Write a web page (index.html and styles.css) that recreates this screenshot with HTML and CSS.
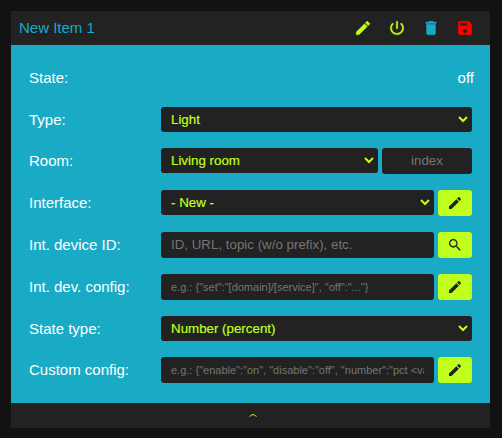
FILE: index.html
```html
<!DOCTYPE html>
<html lang="en">
<head>
<meta charset="utf-8">
<title>New Item 1</title>
<link rel="stylesheet" href="styles.css">
</head>
<body>
<svg class="defs" aria-hidden="true">
  <symbol id="pencil" viewBox="0 0 24 24"><path d="M3 17.25V21h3.75L17.81 9.94l-3.75-3.75L3 17.25zM20.71 7.04c.39-.39.39-1.02 0-1.41l-2.34-2.34c-.39-.39-1.02-.39-1.41 0l-1.83 1.83 3.75 3.75 1.83-1.83z"/></symbol>
  <symbol id="power" viewBox="0 0 24 24"><path d="M13 3h-2v10h2V3zm4.83 2.17l-1.42 1.42C17.99 7.86 19 9.81 19 12c0 3.87-3.13 7-7 7s-7-3.13-7-7c0-2.19 1.01-4.14 2.58-5.42L6.17 5.17C4.23 6.82 3 9.26 3 12c0 4.97 4.03 9 9 9s9-4.03 9-9c0-2.74-1.23-5.18-3.17-6.83z"/></symbol>
  <symbol id="trash" viewBox="0 0 24 24"><path d="M6 19c0 1.1.9 2 2 2h8c1.100 0 2-.9 2-2V7H6v12zM19 4h-3.500l-1-1h-5l-1 1H5v2h14V4z"/></symbol>
  <symbol id="save" viewBox="0 0 24 24"><path d="M17 3H5c-1.110 0-2 .9-2 2v14c0 1.100.890 2 2 2h14c1.100 0 2-.9 2-2V7l-4-4zm-5 16c-1.660 0-3-1.340-3-3s1.340-3 3-3 3 1.340 3 3-1.340 3-3 3zm3-10H5V5h10v4z"/></symbol>
  <symbol id="search" viewBox="0 0 24 24"><path d="M15.500 14h-.79l-.28-.27C15.410 12.590 16 11.110 16 9.500 16 5.910 13.090 3 9.500 3S3 5.910 3 9.500 5.910 16 9.500 16c1.610 0 3.090-.59 4.230-1.570l.27.28v.79l5 4.990L20.490 19l-4.990-5zm-6 0C7.010 14 5 11.990 5 9.500S7.010 5 9.500 5 14 7.010 14 9.500 11.990 14 9.500 14z"/></symbol>
</svg>
<main class="card">
  <header class="head">
    <span class="title">New Item 1</span>
    <svg class="lime"><use href="#pencil"/></svg>
    <svg class="lime"><use href="#power"/></svg>
    <svg class="blue"><use href="#trash"/></svg>
    <svg class="red"><use href="#save"/></svg>
  </header>
  <section class="body">
    <div class="row state"><span class="label">State:</span><span>off</span></div>
    <div class="row short"><span class="label">Type:</span><select><option>Light</option></select></div>
    <div class="row"><span class="label">Room:</span><select><option>Living room</option></select><input class="index" placeholder="index"></div>
    <div class="row"><span class="label">Interface:</span><select><option>- New -</option></select><button><svg><use href="#pencil"/></svg></button></div>
    <div class="row"><span class="label">Int. device ID:</span><input placeholder="ID, URL, topic (w/o prefix), etc."><button><svg><use href="#search"/></svg></button></div>
    <div class="row"><span class="label">Int. dev. config:</span><input class="small" placeholder='e.g.: {"set":"[domain]/[service]", "off":"..."}'><button><svg><use href="#pencil"/></svg></button></div>
    <div class="row short"><span class="label">State type:</span><select><option>Number (percent)</option></select></div>
    <div class="row"><span class="label">Custom config:</span><input class="small" placeholder='e.g.: {"enable":"on", "disable":"off", "number":"pct &lt;val&gt;"}'><button><svg><use href="#pencil"/></svg></button></div>
  </section>
  <footer class="foot"><svg viewBox="0 0 8 3"><path d="M.5 2.500Q1.500 2.200 2.300 1.100Q4 .1 5.700 1.100Q6.500 2.200 7.500 2.500"/></svg></footer>
</main>
</body>
</html>
```
FILE: styles.css
```css
* { box-sizing: border-box; }
body {
  margin: 0;
  padding: 11px 12px 10px 11px;
  background: #121212;
  color: #fff;
  font: 15px "Liberation Sans", Arial, sans-serif;
}
.defs { display: none; }
.card { display: flex; flex-direction: column; width: 479px; }
.head {
  display: flex;
  align-items: center;
  gap: 16px;
  height: 34px;
  padding: 0 16px 0 8px;
  background: #222;
  color: #19abc5;
}
.title { flex: 1; padding-bottom: 2px; }
.head svg {
  width: 18px;
  height: 18px;
  fill: currentColor;
  stroke: currentColor;
  stroke-width: .5;
}
.head .lime { color: #bfff1b; }
.head .red { color: #f00; }
.body {
  display: flex;
  flex-direction: column;
  gap: 16px;
  height: 358px;
  padding: 20px 18px 0;
  background: #19abc5;
}
.row { display: flex; align-items: flex-start; gap: 4px; height: 26px; }
.row.short { height: 25px; }
.row.state { justify-content: space-between; margin-right: -2px; }
.label { width: 128px; flex: none; }
.row > span { line-height: 26px; }
select, input, button { border: 0; border-radius: 3px; margin: 0; }
select, input {
  flex: 1;
  min-width: 0;
  background: #222;
  color: #bfff1b;
  font-family: "Liberation Sans", Arial, sans-serif;
}
select {
  height: 25px;
  padding: 0 6px;
  border-right: 1px solid #222;
  font-size: 13.333px;
  -webkit-text-stroke: .2px #bfff1b;
}
input { height: 26px; padding: 0 10px 2px; font-size: 13.333px; }
input::placeholder { color: #757575; }
input.small { padding-bottom: 0; font-size: 11px; }
input.index { flex: 0 0 90px; text-align: center; }
button {
  display: flex;
  align-items: center;
  justify-content: center;
  width: 34px;
  height: 26px;
  padding: 0;
  background: #bfff1b;
}
button svg { width: 16px; height: 16px; fill: #222; }
.foot {
  display: flex;
  align-items: center;
  justify-content: center;
  height: 25px;
  padding-left: 5px;
  background: #222;
}
.foot svg { width: 8px; height: 3px; fill: none; stroke: #bfff1b; }
```
